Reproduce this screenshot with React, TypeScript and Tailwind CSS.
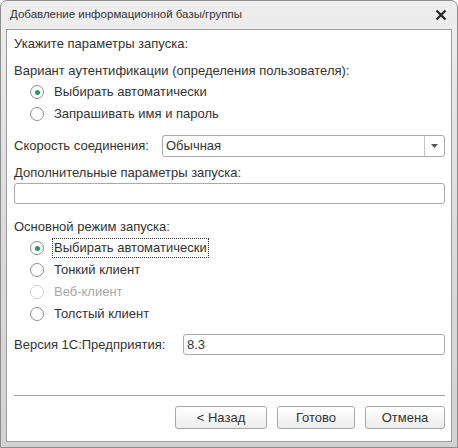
import React from 'react';

const font = { fontFamily: '"Liberation Sans", Arial, sans-serif' };

const Radio: React.FC<{ checked?: boolean; disabled?: boolean; focused?: boolean; label: string }> = ({
  checked,
  disabled,
  focused,
  label,
}) => (
  <div className="h-[22px] flex items-center pl-[16px]">
    <span
      className={`w-[14px] h-[14px] rounded-full border flex items-center justify-center bg-white ${
        disabled ? 'border-[#d0d0d0]' : 'border-[#8c8c8c]'
      }`}
    >
      {checked && <span className="w-[5px] h-[5px] rounded-full bg-[#1e9e54]" />}
    </span>
    <span
      className={`ml-[8px] px-[1px] leading-[18px] ${
        focused ? 'border border-dotted border-[#333]' : 'border border-transparent'
      } ${disabled ? 'text-[#a8a8a8]' : 'text-[#333]'}`}
    >
      {label}
    </span>
  </div>
);

const Button: React.FC<{ label: string; w: string }> = ({ label, w }) => (
  <button
    className={`${w} h-[23px] rounded-[3px] border border-[#a6a6a6] bg-gradient-to-b from-white to-[#ededed] text-[#333] text-[13px]`}
  >
    {label}
  </button>
);

export default function App() {
  return (
    <div className="w-[458px] h-[448px] bg-white" style={font}>
      <div className="w-[458px] h-[448px] rounded-t-[7px] border border-[#8e8e8e] bg-gradient-to-b from-[#eeeeee] via-[#dcdcdc] to-[#d2d2d2] flex flex-col">
        <div className="h-[28px] flex items-center pl-[9px] pr-[10px] shrink-0">
          <span className="text-[11.5px] text-[#333] flex-1">Добавление информационной базы/группы</span>
          <svg width="12" height="12" viewBox="0 0 12 12">
            <path d="M1.5 1.5 L10.5 10.5 M10.5 1.5 L1.5 10.5" stroke="#2a2a2a" strokeWidth="2.4" />
          </svg>
        </div>
        <div className="flex-1 mx-[5px] mb-[5px] bg-white border border-[#9c9c9c] pl-[7px] pr-[6px] text-[13px] text-[#333]">
          <div className="h-[22px] mt-[3px] flex items-center">Укажите параметры запуска:</div>
          <div className="h-[21px] mt-[5px] flex items-center">Вариант аутентификации (определения пользователя):</div>
          <Radio checked label="Выбирать автоматически" />
          <Radio label="Запрашивать имя и пароль" />

          <div className="mt-[10px] h-[22px] flex items-center">
            <span className="w-[148px]">Скорость соединения:</span>
            <div className="flex-1 h-[22px] border border-[#aaaaaa] rounded-[3px] flex items-center">
              <span className="flex-1 pl-[3px]">Обычная</span>
              <span className="w-[20px] h-full border-l border-[#c4c4c4] flex items-center justify-center">
                <svg width="7" height="4" viewBox="0 0 7 4">
                  <path d="M0 0 H7 L3.5 4 Z" fill="#555" />
                </svg>
              </span>
            </div>
          </div>

          <div className="mt-[6px] h-[20px] flex items-center">Дополнительные параметры запуска:</div>
          <div className="h-[21px] border border-[#aaaaaa] rounded-[3px]" />

          <div className="mt-[12px] h-[21px] flex items-center">Основной режим запуска:</div>
          <Radio checked focused label="Выбирать автоматически" />
          <Radio label="Тонкий клиент" />
          <Radio disabled label="Веб-клиент" />
          <Radio label="Толстый клиент" />

          <div className="mt-[9px] h-[21px] flex items-center">
            <span className="w-[169px]">Версия 1С:Предприятия:</span>
            <div className="flex-1 h-[21px] border border-[#aaaaaa] rounded-[3px] flex items-center pl-[3px]">8.3</div>
          </div>

          <div className="mt-[40px] h-[1px] bg-[#a0a0a0]" />

          <div className="mt-[10px] flex justify-end gap-[10px]">
            <Button label="< Назад" w="w-[92px]" />
            <Button label="Готово" w="w-[78px]" />
            <Button label="Отмена" w="w-[80px]" />
          </div>
        </div>
      </div>
    </div>
  );
}
